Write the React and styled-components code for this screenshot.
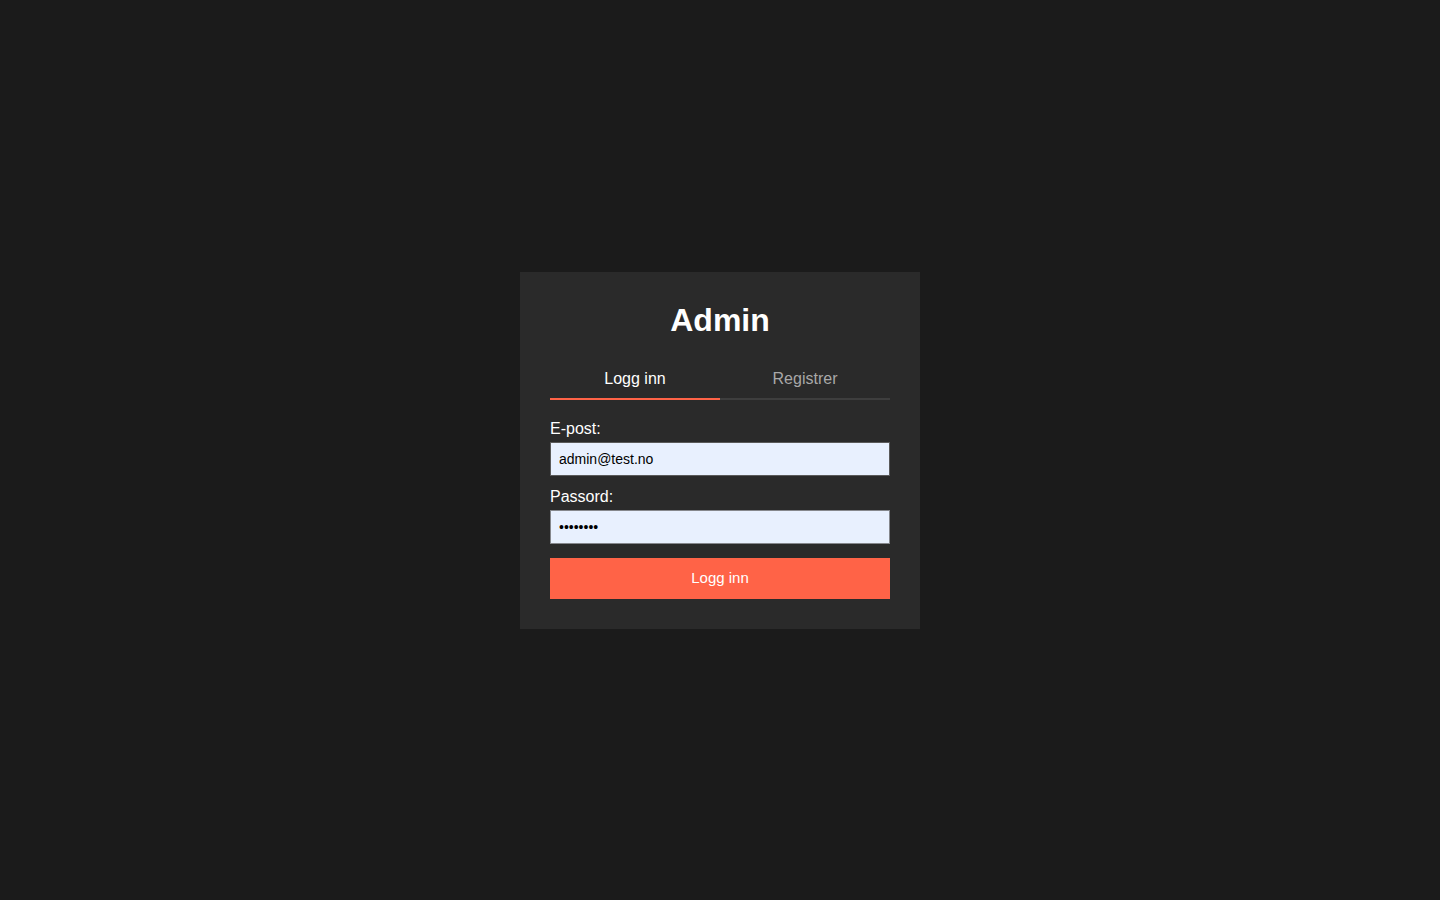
import React from "react";
import styled, { createGlobalStyle } from "styled-components";

const Global = createGlobalStyle`
  html, body { margin: 0; padding: 0; background: #1b1b1b; }
  body { font-family: "Liberation Sans", Arial, sans-serif; color: #fff; }
  * { box-sizing: border-box; }
`;

const Page = styled.div`
  min-height: 100vh;
  display: flex;
  align-items: center;
  justify-content: center;
`;

const Card = styled.div`
  width: 400px;
  background: #2a2a2a;
  padding: 30px;
  display: flex;
  flex-direction: column;
`;

const Title = styled.h1`
  margin: 0 0 21px;
  font-size: 32px;
  line-height: 37px;
  font-weight: 700;
  text-align: center;
  color: #fff;
`;

const Tabs = styled.div`
  display: flex;
`;

const Tab = styled.button`
  flex: 1;
  background: none;
  border: none;
  border-bottom: 2px solid ${(p) => (p.$active ? "#ff6347" : "#3e3e3e")};
  padding: 10px 0;
  font-family: inherit;
  font-size: 16px;
  line-height: 18px;
  color: ${(p) => (p.$active ? "#ffffff" : "#a8a8a8")};
  cursor: pointer;
`;

const Form = styled.form`
  margin-top: 20px;
  display: flex;
  flex-direction: column;
`;

const Group = styled.div`
  display: flex;
  flex-direction: column;
  margin-bottom: ${(p) => p.$mb}px;
`;

const Label = styled.label`
  font-size: 16px;
  line-height: 18px;
  color: #fff;
  margin-bottom: 4px;
`;

const Input = styled.input`
  height: 34px;
  width: 100%;
  padding: 8px;
  font-family: "Liberation Sans", Arial, sans-serif;
  font-size: 14px;
  color: #000;
  background: #e8f0fe;
  border: 1px solid ${(p) => p.$border};
  border-radius: 0;
  outline: none;
`;

const Submit = styled.button`
  height: 41px;
  width: 100%;
  border: none;
  background: #ff6347;
  color: #fff;
  font-family: "Liberation Sans", Arial, sans-serif;
  font-size: 15px;
  line-height: 17px;
  padding: 11px 0 13px;
  cursor: pointer;
`;

export default function App() {
  return (
    <>
      <Global />
      <Page>
        <Card>
          <Title>Admin</Title>
          <Tabs>
            <Tab $active>Logg inn</Tab>
            <Tab>Registrer</Tab>
          </Tabs>
          <Form onSubmit={(e) => e.preventDefault()}>
            <Group $mb={12}>
              <Label>E-post:</Label>
              <Input $border="#5a5a5a" type="email" defaultValue="admin@test.no" />
            </Group>
            <Group $mb={14}>
              <Label>Passord:</Label>
              <Input $border="#85878c" type="password" defaultValue="password" />
            </Group>
            <Submit type="submit">Logg inn</Submit>
          </Form>
        </Card>
      </Page>
    </>
  );
}
